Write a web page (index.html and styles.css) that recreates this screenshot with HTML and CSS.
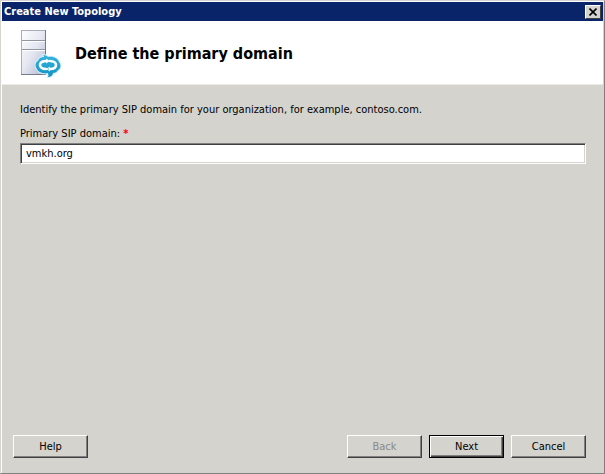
FILE: index.html
```html
<!DOCTYPE html>
<html lang="en">
  <head>
    <meta charset="UTF-8" />
    <meta name="viewport" content="width=device-width, initial-scale=1.0" />
    <title>Create New Topology</title>
    <link rel="stylesheet" href="styles.css">
  </head>
  <body>
    <form class="window">
      <div class="titlebar">
        <span class="titlebar-text">Create New Topology</span>
        <button class="titlebar-close" type="button" aria-label="Close">
          <svg width="8" height="8" viewBox="0 0 8 8">
            <path d="M0.5 0.5L7.5 7.5M7.5 0.5L0.5 7.5" stroke="#000" stroke-width="1.6" />
          </svg>
        </button>
      </div>

      <header class="banner">
        <svg class="banner-icon" width="42" height="50" viewBox="0 0 42 50">
          <defs>
            <linearGradient id="tower" x1="0" y1="0" x2="1" y2="1">
              <stop offset="0" stop-color="#ffffff" />
              <stop offset="0.5" stop-color="#e4e6f1" />
              <stop offset="1" stop-color="#afb5cd" />
            </linearGradient>
            <linearGradient id="swirl" x1="0" y1="0" x2="0" y2="1">
              <stop offset="0" stop-color="#36b4dc" />
              <stop offset="1" stop-color="#1592c6" />
            </linearGradient>
          </defs>
          <!-- server tower -->
          <rect x="1.5" y="2.5" width="24" height="44" fill="url(#tower)" stroke="#a9adb9" />
          <path d="M25.5 2V47M1 46.5H26" stroke="#777b87" />
          <path d="M2 12.500H25M2 21.500H25" stroke="#8f95a3" />
          <path d="M2 13.500H25M2 22.500H25" stroke="#fff" />
          <!-- two speech bubbles wrapped around each other -->
          <path d="M23 27C26 27 27 28 28 29C34 28 38 31 39 34C41 36 41 41 38 42C37 44 35 45 33 45C33 47 31 49 28 49C29 47 28 46 28 45C23 46 18 44 17 41C15 39 15 34 18 33C19 30 21 29 24 29C24 28 24 28 23 27Z" fill="url(#swirl)" stroke="#d3effa" stroke-width="2" paint-order="stroke" />
          <path d="M26 41C22 41 20 39 20 37C20 34 23 33 27 33M30 33C34 33 36 35 36 37C36 40 34 41 30 41" fill="none" stroke="#fff" stroke-width="2.6" stroke-linecap="round" />
          <path d="M26 31L29 33L26 35M30 39L27 41L30 43" fill="none" stroke="#fff" stroke-width="1" />
        </svg>
        <h1 class="banner-title">Define the primary domain</h1>
      </header>

      <main class="content">
        <p class="intro">Identify the primary SIP domain for your organization, for example, contoso.com.</p>
        <label class="field-label" for="sip-domain">Primary SIP domain: <span class="required">*</span></label>
        <input class="field-input" id="sip-domain" type="text" value="vmkh.org" />
      </main>

      <footer class="actions">
        <button class="button button-help" type="button">Help</button>
        <button class="button" type="button" disabled>Back</button>
        <button class="button button-default" type="submit">Next</button>
        <button class="button" type="button">Cancel</button>
      </footer>
    </form>
  </body>
</html>
```

FILE: styles.css
```css
* {
  box-sizing: border-box;
}

body {
  margin: 0;
  color: #000;
  font: 11px/14px "DejaVu Sans Condensed", "DejaVu Sans", sans-serif;
}

.window {
  display: flex;
  flex-direction: column;
  min-height: 100vh;
  padding: 1px;
  background: #d4d3ce;
  border: 1px solid;
  border-color: #d4d3ce #808080 #808080 #d4d3ce;
  box-shadow: inset 1px 1px #fff;
}

/* title bar */
.titlebar {
  display: flex;
  align-items: center;
  justify-content: space-between;
  height: 19px;
  padding: 1px 2px 0;
  background: #0a246a;
}

.titlebar-text {
  color: #fff;
  font-weight: bold;
}

.titlebar-close {
  display: flex;
  align-items: center;
  justify-content: center;
  width: 16px;
  height: 14px;
  padding: 0;
  background: #d4d3ce;
  border: 1px solid;
  border-color: #fff #404040 #404040 #fff;
}

/* banner */
.banner {
  display: flex;
  align-items: center;
  gap: 13px;
  height: 64px;
  padding: 0 18px;
  background: #fff;
  border-bottom: 1px solid #ecebe8;
}

.banner-title {
  margin: 0;
  padding-top: 2px;
  font-size: 16px;
  line-height: 20px;
}

/* content */
.content {
  display: flex;
  flex: 1;
  flex-direction: column;
  padding: 18px 17px 0 18px;
}

.intro {
  margin: 0 0 10px;
}

.field-label {
  margin-bottom: 2px;
}

.required {
  color: #f00;
  font-weight: bold;
}

.field-input {
  width: 100%;
  height: 21px;
  padding: 0 5px;
  font: inherit;
  background: #fff;
  border: 1px solid;
  border-color: #808080 #fff #fff #808080;
  box-shadow: inset 1px 1px #404040, inset -1px -1px #d4d3ce;
  outline: none;
}

/* buttons */
.actions {
  display: flex;
  gap: 7px;
  padding: 0 17px 14px 11px;
}

.button {
  width: 75px;
  height: 23px;
  padding: 0;
  color: #000;
  font: inherit;
  background: #d4d3ce;
  border: 1px solid;
  border-color: #fff #404040 #404040 #fff;
  box-shadow: inset -1px -1px #808080;
}

.button:disabled {
  color: #8a8a86;
}

.button-help {
  margin-right: auto;
}

.button-default {
  border-color: #000;
  box-shadow: inset 1px 1px #fff, inset -1px -1px #404040, inset -2px -2px #808080;
}
```
